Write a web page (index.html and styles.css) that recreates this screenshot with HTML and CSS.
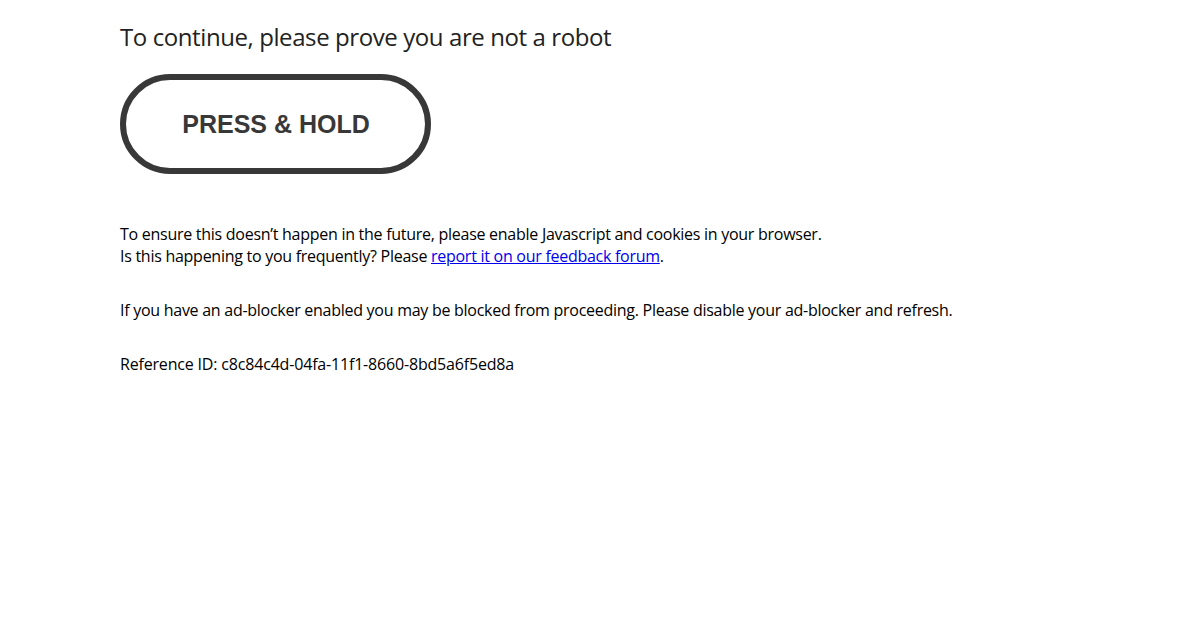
FILE: index.html
```html
<!DOCTYPE html>
<html>
<head>
<meta charset="utf-8">
<link rel="stylesheet" href="styles.css">
</head>
<body>
<div class="page">
  <h1 class="title">To continue, please prove you are not a robot</h1>
  <div class="hold-wrap">
    <div class="hold-btn">PRESS &amp; HOLD</div>
  </div>
  <p class="para">To ensure this doesn’t happen in the future, please enable Javascript and cookies in your browser.<br>Is this happening to you frequently? Please <a href="#" class="link">report it on our feedback forum</a>.</p>
  <p class="para">If you have an ad-blocker enabled you may be blocked from proceeding. Please disable your ad-blocker and refresh.</p>
  <p class="para ref-id">Reference ID: c8c84c4d-04fa-11f1-8660-8bd5a6f5ed8a</p>
</div>
</body>
</html>
```

FILE: styles.css
```css
html, body {
  margin: 0;
  padding: 0;
  background: #fff;
}
body {
  font-family: "Open Sans", "Noto Sans", sans-serif;
  color: #000;
}
.page {
  padding: 20px 120px 0 120px;
}
.title {
  margin: 0;
  font-size: 24px;
  font-weight: 400;
  line-height: 34px;
  color: #222;
  letter-spacing: -0.41px;
}
.hold-wrap {
  margin-top: 20px;
  display: flex;
}
.hold-btn {
  box-sizing: border-box;
  width: 311px;
  height: 100px;
  border: 6px solid #383838;
  border-radius: 50px;
  display: flex;
  align-items: center;
  justify-content: center;
  font-family: "Liberation Sans", Arial, sans-serif;
  font-weight: 700;
  font-size: 25px;
  color: #383838;
  padding-left: 1px;
}
.para {
  margin: 0;
  font-size: 16px;
  line-height: 22px;
  letter-spacing: -0.27px;
}
.ref-id {
  letter-spacing: -0.18px;
}
.hold-wrap + .para {
  margin-top: 49px;
}
.para + .para {
  margin-top: 32px;
}
.link {
  color: #0000ee;
  text-decoration: underline;
}
```
